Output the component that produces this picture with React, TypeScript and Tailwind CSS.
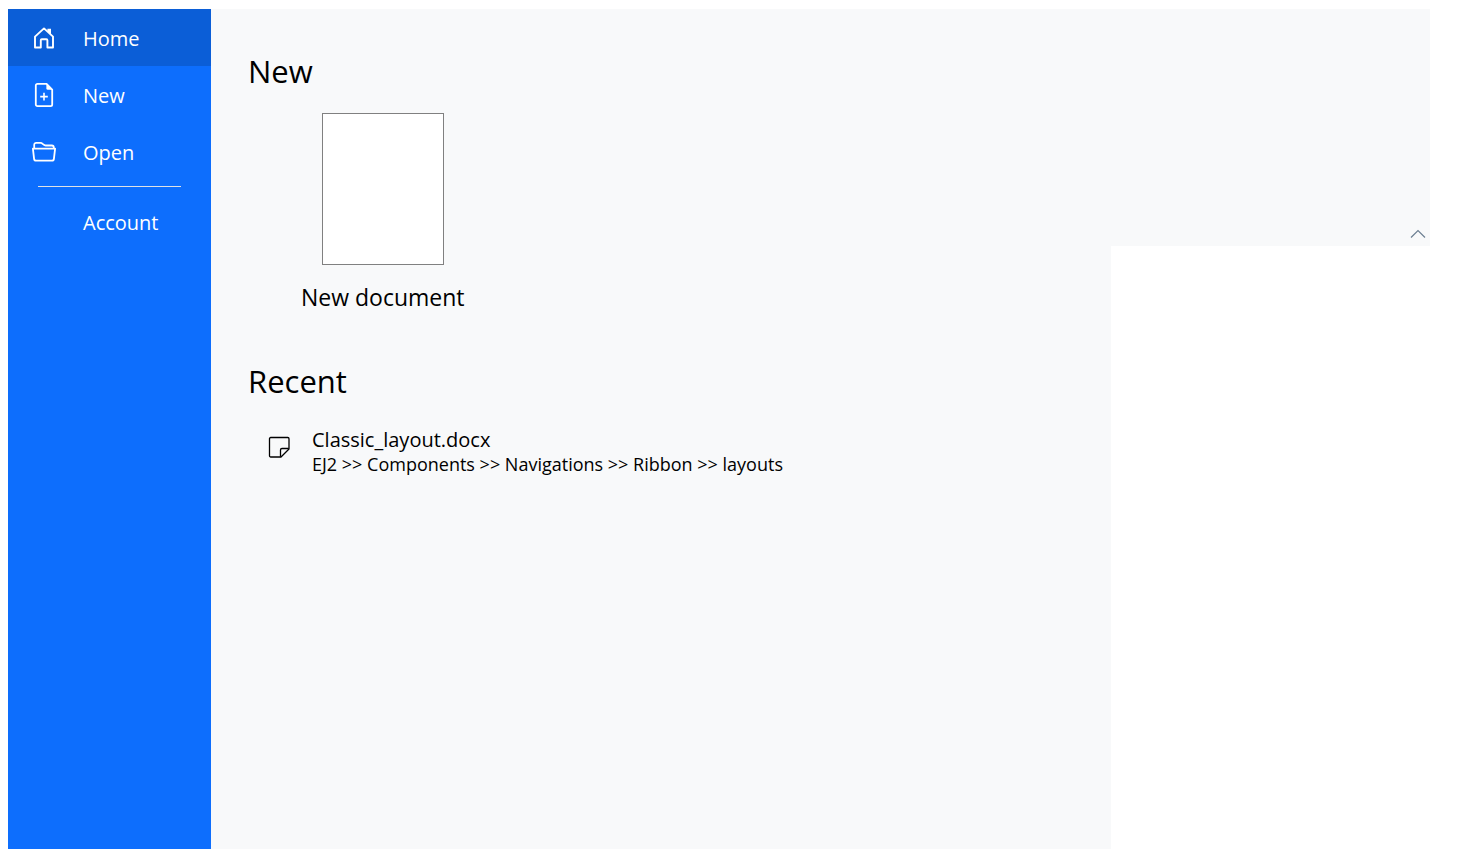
import React from "react";

type IconProps = { className?: string };

function HomeIcon({ className }: IconProps) {
  return (
    <svg className={className} viewBox="0 0 24 24" fill="none" stroke="currentColor" strokeWidth="1.9" strokeLinejoin="round" aria-hidden="true">
      <path d="M3 10.6 12 2.4l9 8.2v10.9h-5.6v-7.2a1 1 0 0 0-1-1H9.8a1 1 0 0 0-1 1v7.2H3z" />
      <path d="M15.4 2.8h3.6v5.6l-3.6-3.2z" fill="currentColor" stroke="none" />
    </svg>
  );
}

function NewIcon({ className }: IconProps) {
  return (
    <svg className={className} viewBox="0 0 24 24" fill="none" stroke="currentColor" strokeWidth="1.8" strokeLinejoin="round" aria-hidden="true">
      <path d="M14.6.9H5.4a1.6 1.6 0 0 0-1.6 1.6v19a1.6 1.6 0 0 0 1.6 1.6h13.2a1.6 1.6 0 0 0 1.6-1.6V6.6z" />
      <path d="M14.4 1v4.4a1.4 1.4 0 0 0 1.4 1.4h4.6z" fill="currentColor" stroke="none" />
      <path d="M12 9.8v7.6M8.2 13.6h7.6" strokeWidth="1.6" />
    </svg>
  );
}

function OpenIcon({ className }: IconProps) {
  return (
    <svg className={className} viewBox="0 0 24 24" fill="none" stroke="currentColor" strokeWidth="1.8" strokeLinejoin="round" aria-hidden="true">
      <path d="M.9 8.6h22.2l-1.2 10.2a2 2 0 0 1-2 1.8H4.1a2 2 0 0 1-2-1.8z" />
      <path d="M2.2 8.4V4.9a2 2 0 0 1 2-2h4.4c1.8 0 3 2.6 5 2.6h6.2a2 2 0 0 1 2 2v.9" />
    </svg>
  );
}

function NoteIcon({ className }: IconProps) {
  return (
    <svg className={className} viewBox="0 0 22 22" fill="none" stroke="currentColor" strokeWidth="1.3" strokeLinejoin="round" aria-hidden="true">
      <path d="M2.7 1.5h17.1a1.2 1.2 0 0 1 1.2 1.2v10.3l-8 8H2.7a1.2 1.2 0 0 1-1.2-1.2V2.7a1.2 1.2 0 0 1 1.2-1.2z" />
      <path d="M12.5 20.8v-6.8a1.5 1.5 0 0 1 1.5-1.5h6.8" />
    </svg>
  );
}

function MenuItem({ label, icon, active }: { label: string; icon?: React.ReactNode; active?: boolean }) {
  return (
    <li>
      <button
        type="button"
        aria-current={active ? "page" : undefined}
        className={
          active
            ? "flex h-[57px] w-full items-center gap-[27px] bg-[#0b5ed7] pl-6 text-left text-xl text-white"
            : "flex h-[57px] w-full items-center gap-[27px] pl-6 text-left text-xl text-white hover:bg-[#0b5ed7]"
        }
      >
        <span className="size-6 shrink-0">{icon}</span>
        <span className="pt-0.5">{label}</span>
      </button>
    </li>
  );
}

export default function App() {
  return (
    <div className="flex min-h-screen bg-white pt-[9px] pr-7 pb-3 pl-2 font-['Open_Sans','Noto_Sans',sans-serif] text-black">
      <div className="flex w-[1103px] bg-[#f8f9fa]">
        <nav aria-label="Backstage" className="w-[203px] shrink-0 bg-[#0d6efd]">
          <ul>
            <MenuItem label="Home" icon={<HomeIcon className="size-6" />} active />
            <MenuItem label="New" icon={<NewIcon className="size-6" />} />
            <MenuItem label="Open" icon={<OpenIcon className="size-6" />} />
            <li role="separator" className="mx-[30px] my-1.5 border-t border-[#dee2e6]" />
            <MenuItem label="Account" />
          </ul>
        </nav>
        <main className="flex-1 px-[37px] pt-10">
          <section>
            <h1 className="text-[31px] leading-[44px]">New</h1>
            <button type="button" className="mt-5 ml-[53px] flex flex-col items-center gap-4">
              <span className="h-[152px] w-[122px] border border-[#808080] bg-white" />
              <span className="text-[23px] leading-8">New document</span>
            </button>
          </section>
          <section className="mt-[46px]">
            <h2 className="text-[31px] leading-[44px]">Recent</h2>
            <a href="#classic-layout" className="mt-[23px] ml-5 flex items-start gap-[22px]">
              <NoteIcon className="mt-2.5 size-[22px] shrink-0" />
              <span className="flex flex-col">
                <span className="text-xl leading-7">Classic_layout.docx</span>
                <span className="text-lg leading-5">
                  EJ2 &gt;&gt; Components &gt;&gt; Navigations &gt;&gt; Ribbon &gt;&gt; layouts
                </span>
              </span>
            </a>
          </section>
        </main>
      </div>
      <div className="flex h-[237px] flex-1 items-end justify-end bg-[#f8f9fa]">
        <button type="button" aria-label="Collapse ribbon" className="flex size-6 items-center justify-center text-[#6c7f92]">
          <svg className="size-4" viewBox="0 0 16 16" fill="none" stroke="currentColor" strokeWidth="1.2" aria-hidden="true">
            <path d="M1 11.5 8 4.5l7 7" />
          </svg>
        </button>
      </div>
    </div>
  );
}
